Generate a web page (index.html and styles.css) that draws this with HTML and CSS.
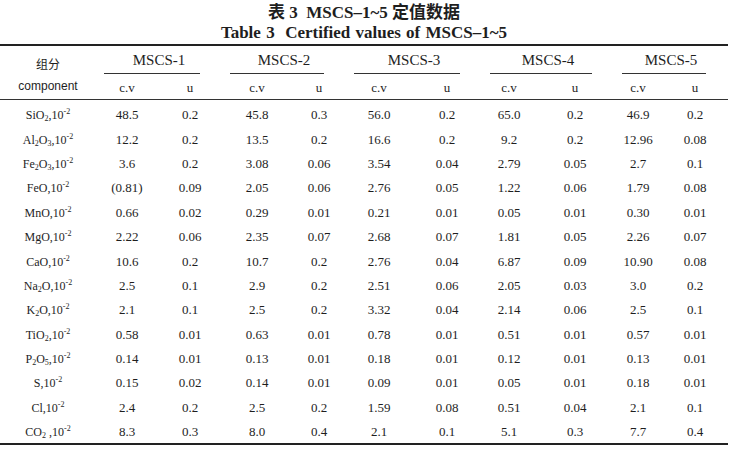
FILE: index.html
```html
<!DOCTYPE html>
<html lang="zh">
<head>
<meta charset="utf-8">
<title>表 3 MSCS-1~5 定值数据</title>
<link rel="stylesheet" href="styles.css">
</head>
<body>
<div class="page">
  <div class="caption">
    <div class="cap-zh">表 3&nbsp;&nbsp;MSCS–1~5 定值数据</div>
    <div class="cap-en">Table 3&nbsp;&nbsp;Certified values of MSCS–1~5</div>
  </div>
  <table class="data">
    <colgroup>
      <col class="c-comp"><col class="c-a"><col class="c-b"><col class="c-c"><col class="c-d"><col class="c-e"><col class="c-f"><col class="c-g"><col class="c-h"><col class="c-i"><col class="c-j">
    </colgroup>
    <thead>
      <tr class="h1">
        <th class="comp-zh">组分</th>
        <th colspan="2" class="grp-cell"><div class="grp">MSCS-1</div></th>
        <th colspan="2" class="grp-cell"><div class="grp">MSCS-2</div></th>
        <th colspan="2" class="grp-cell"><div class="grp">MSCS-3</div></th>
        <th colspan="2" class="grp-cell"><div class="grp">MSCS-4</div></th>
        <th colspan="2" class="grp-cell"><div class="grp">MSCS-5</div></th>
      </tr>
      <tr class="h2">
        <th class="comp-en">component</th>
        <th>c.v</th><th>u</th><th>c.v</th><th>u</th><th>c.v</th><th>u</th><th>c.v</th><th>u</th><th>c.v</th><th>u</th>
      </tr>
    </thead>
    <tbody>
      <tr><td class="lbl">SiO<sub>2</sub>,10<sup>-2</sup></td><td>48.5</td><td>0.2</td><td>45.8</td><td>0.3</td><td>56.0</td><td>0.2</td><td>65.0</td><td>0.2</td><td>46.9</td><td>0.2</td></tr>
      <tr><td class="lbl">Al<sub>2</sub>O<sub>3</sub>,10<sup>-2</sup></td><td>12.2</td><td>0.2</td><td>13.5</td><td>0.2</td><td>16.6</td><td>0.2</td><td>9.2</td><td>0.2</td><td>12.96</td><td>0.08</td></tr>
      <tr><td class="lbl">Fe<sub>2</sub>O<sub>3</sub>,10<sup>-2</sup></td><td>3.6</td><td>0.2</td><td>3.08</td><td>0.06</td><td>3.54</td><td>0.04</td><td>2.79</td><td>0.05</td><td>2.7</td><td>0.1</td></tr>
      <tr><td class="lbl">FeO,10<sup>-2</sup></td><td>(0.81)</td><td>0.09</td><td>2.05</td><td>0.06</td><td>2.76</td><td>0.05</td><td>1.22</td><td>0.06</td><td>1.79</td><td>0.08</td></tr>
      <tr><td class="lbl">MnO,10<sup>-2</sup></td><td>0.66</td><td>0.02</td><td>0.29</td><td>0.01</td><td>0.21</td><td>0.01</td><td>0.05</td><td>0.01</td><td>0.30</td><td>0.01</td></tr>
      <tr><td class="lbl">MgO,10<sup>-2</sup></td><td>2.22</td><td>0.06</td><td>2.35</td><td>0.07</td><td>2.68</td><td>0.07</td><td>1.81</td><td>0.05</td><td>2.26</td><td>0.07</td></tr>
      <tr><td class="lbl">CaO,10<sup>-2</sup></td><td>10.6</td><td>0.2</td><td>10.7</td><td>0.2</td><td>2.76</td><td>0.04</td><td>6.87</td><td>0.09</td><td>10.90</td><td>0.08</td></tr>
      <tr><td class="lbl">Na<sub>2</sub>O,10<sup>-2</sup></td><td>2.5</td><td>0.1</td><td>2.9</td><td>0.2</td><td>2.51</td><td>0.06</td><td>2.05</td><td>0.03</td><td>3.0</td><td>0.2</td></tr>
      <tr><td class="lbl">K<sub>2</sub>O,10<sup>-2</sup></td><td>2.1</td><td>0.1</td><td>2.5</td><td>0.2</td><td>3.32</td><td>0.04</td><td>2.14</td><td>0.06</td><td>2.5</td><td>0.1</td></tr>
      <tr><td class="lbl">TiO<sub>2</sub>,10<sup>-2</sup></td><td>0.58</td><td>0.01</td><td>0.63</td><td>0.01</td><td>0.78</td><td>0.01</td><td>0.51</td><td>0.01</td><td>0.57</td><td>0.01</td></tr>
      <tr><td class="lbl">P<sub>2</sub>O<sub>5</sub>,10<sup>-2</sup></td><td>0.14</td><td>0.01</td><td>0.13</td><td>0.01</td><td>0.18</td><td>0.01</td><td>0.12</td><td>0.01</td><td>0.13</td><td>0.01</td></tr>
      <tr><td class="lbl">S,10<sup>-2</sup></td><td>0.15</td><td>0.02</td><td>0.14</td><td>0.01</td><td>0.09</td><td>0.01</td><td>0.05</td><td>0.01</td><td>0.18</td><td>0.01</td></tr>
      <tr><td class="lbl">Cl,10<sup>-2</sup></td><td>2.4</td><td>0.2</td><td>2.5</td><td>0.2</td><td>1.59</td><td>0.08</td><td>0.51</td><td>0.04</td><td>2.1</td><td>0.1</td></tr>
      <tr><td class="lbl">CO<sub>2</sub>&nbsp;,10<sup>-2</sup></td><td>8.3</td><td>0.3</td><td>8.0</td><td>0.4</td><td>2.1</td><td>0.1</td><td>5.1</td><td>0.3</td><td>7.7</td><td>0.4</td></tr>
    </tbody>
  </table>
</div>
</body>
</html>
```
FILE: styles.css
```css
* { box-sizing: border-box; }

body {
  margin: 0;
  background: #ffffff;
  color: #1e1e1e;
  font-family: "Liberation Serif", "Noto Sans CJK SC", serif;
}

.page {
  width: 728px;
  padding-top: 3px;
}

.caption {
  text-align: center;
  font-weight: bold;
  font-size: 17px;
  line-height: 20px;
  margin-bottom: 1px;
  font-family: "Liberation Serif", "Noto Sans CJK SC", serif;
}

.cap-zh { font-size: 17px; }

.cap-en { word-spacing: 1px; }

.data {
  width: 728px;
  border-collapse: collapse;
  table-layout: fixed;
  font-size: 13px;
  font-family: "Liberation Serif", "Noto Sans CJK SC", serif;
}

.c-comp { width: 96px; }
.c-a { width: 62px; }
.c-b { width: 64px; }
.c-c { width: 70px; }
.c-d { width: 54px; }
.c-e { width: 66px; }
.c-f { width: 70px; }
.c-g { width: 54px; }
.c-h { width: 78px; }
.c-i { width: 48px; }
.c-j { width: 66px; }

.data th,
.data td {
  padding: 0;
  text-align: center;
  font-weight: normal;
  white-space: nowrap;
  font-family: "Liberation Serif", "Noto Sans CJK SC", serif;
}

.h1 { border-top: 2px solid #222; }

.h1 th {
  height: 29px;
  vertical-align: bottom;
}

.grp {
  margin: 0 22px 0 8px;
  padding-left: 14px;
  font-size: 15px;
  line-height: 16px;
  padding-bottom: 5px;
  border-bottom: 1px solid #333;
}

.data th.comp-zh {
  font-family: "Noto Sans CJK SC", sans-serif;
  font-size: 12px;
  line-height: 16px;
  padding-bottom: 2px;
}

.h2 { border-bottom: 1px solid #333; }

.h2 th {
  height: 25px;
  line-height: 16px;
  vertical-align: middle;
  font-size: 13px;
  padding-top: 3px;
}

.data th.comp-en {
  font-family: "Liberation Sans Narrow", "Liberation Sans", sans-serif;
  font-size: 12px;
  padding-top: 0;
}

.data tbody td {
  height: 24.4px;
  line-height: 16px;
  vertical-align: middle;
}

.data tbody tr:first-child td {
  height: 28.4px;
  padding-top: 4px;
}

.data tbody tr:last-child { border-bottom: 2px solid #222; }

.data td.lbl { font-size: 12px; }

.lbl sub,
.lbl sup {
  font-size: 8px;
  line-height: 0;
}

.lbl sub { vertical-align: -2px; }
.lbl sup { vertical-align: 5px; }
```
